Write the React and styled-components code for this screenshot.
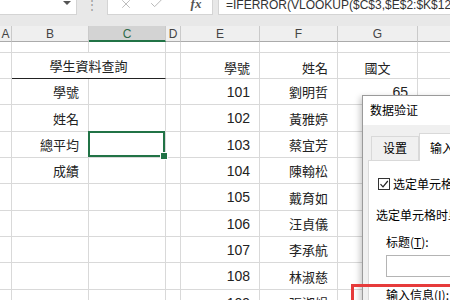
import React from 'react';
import styled, { createGlobalStyle, css } from 'styled-components';
import { X, Check } from 'lucide-react';

const Global = createGlobalStyle`
  html, body { margin: 0; padding: 0; width: 450px; height: 300px; overflow: hidden; background: #fff; }
  #root { width: 450px; height: 300px; }
  * { box-sizing: border-box; }
`;

const Page = styled.div`
  position: relative;
  width: 450px;
  height: 300px;
  overflow: hidden;
  font-family: "Liberation Sans", "Noto Sans CJK TC", sans-serif;
`;

/* ---------- formula bar ---------- */
const FormulaBar = styled.div`
  display: flex;
  align-items: flex-start;
  height: 36px;
  margin-top: -10px;
  background: #e8e8e8;
`;

const NameBox = styled.div`
  width: 77px;
  height: 25px;
  background: #fff;
  border-right: 1px solid #d4d4d4;
  border-bottom: 1px solid #d4d4d4;
  display: flex;
  align-items: center;
  justify-content: flex-end;
  padding-right: 5px;
`;

const Arrow = styled.span`
  width: 0;
  height: 0;
  border-left: 4px solid transparent;
  border-right: 4px solid transparent;
  border-top: 4px solid #555;
  margin-top: 1px;
`;

const Grip = styled.div`
  width: 30px;
  height: 25px;
  display: flex;
  align-items: center;
  justify-content: center;
  color: #9a9a9a;
  font-size: 12px;
  line-height: 1;
  padding-top: 4px;
`;

const FuncBox = styled.div`
  width: 106px;
  height: 25px;
  background: #fff;
  border: 1px solid #d4d4d4;
  border-top: none;
  display: flex;
  align-items: center;
  padding-top: 3px;
`;

const FuncSlot = styled.span`
  width: 20px;
  margin-left: ${(p) => p.$ml}px;
  display: flex;
  align-items: center;
  justify-content: center;
  color: #b8b8b8;
`;

const Fx = styled.span`
  font-family: "Liberation Serif", serif;
  font-style: italic;
  font-weight: bold;
  font-size: 13px;
  color: #555;
`;

const FormulaInput = styled.div`
  flex: 1;
  height: 25px;
  margin-left: 5px;
  background: #fff;
  border-left: 1px solid #d4d4d4;
  border-bottom: 1px solid #d4d4d4;
  padding-left: 7px;
  font-size: 12px;
  line-height: 25px;
  padding-top: 3px;
  color: #333;
  white-space: nowrap;
  overflow: hidden;
`;

/* ---------- sheet ---------- */
const Sheet = styled.div`
  display: grid;
  grid-template-columns: 12px 77px 77px 15px 79px 78px 80px 120px;
  grid-template-rows: 16px 11px 26px 26px 27px 26px 26px 27px 26px 26px 27px 26px;
`;

const ColHead = styled.div`
  background: ${(p) => (p.$active ? '#d3d3d3' : '#efefef')};
  border-right: 1px solid #cacaca;
  border-bottom: ${(p) => (p.$active ? '2px solid #217346' : '1px solid #ababab')};
  color: ${(p) => (p.$active ? '#2f6b4a' : '#444')};
  font-size: 12px;
  display: flex;
  align-items: center;
  justify-content: center;
  padding-top: ${(p) => (p.$active ? '2px' : '0')};
`;

const Cell = styled.div`
  position: relative;
  grid-column: span ${(p) => p.$span || 1};
  border-right: 1px solid #d9d9d9;
  border-bottom: 1px solid ${(p) => (p.$underline ? '#222' : '#d9d9d9')};
  display: flex;
  align-items: ${(p) => (p.$low ? 'flex-end' : 'center')};
  line-height: ${(p) => (p.$low ? '13px' : 'normal')};
  padding-bottom: ${(p) => (p.$low ? '3px' : '0')};
  justify-content: ${(p) => (p.$align === 'center' ? 'center' : 'flex-end')};
  padding-right: ${(p) => (p.$align === 'center' ? '0' : '9px')};
  font-size: ${(p) => (p.$num ? '14px' : '13px')};
  color: #222;
  white-space: nowrap;
  ${(p) =>
    p.$selected &&
    css`
      &::before {
        content: '';
        position: absolute;
        top: -1px;
        left: -1px;
        right: 0;
        bottom: 0;
        border: 2px solid #217346;
        z-index: 1;
      }
      &::after {
        content: '';
        position: absolute;
        right: -3px;
        bottom: -3px;
        width: 6px;
        height: 6px;
        background: #217346;
        border: 1px solid #fff;
        z-index: 2;
      }
    `}
`;

/* ---------- dialog ---------- */
const Dialog = styled.div`
  position: absolute;
  left: 362px;
  top: 95px;
  width: 150px;
  height: 240px;
  border: 1px solid #9a9a9a;
  box-shadow: -2px 2px 6px rgba(0, 0, 0, 0.22);
  background: #f0f0f0;
  font-family: "Noto Sans CJK SC", sans-serif;
  font-size: 12px;
  color: #000;
  z-index: 5;
`;

const TitleBar = styled.div`
  height: 29px;
  background: #fff;
  padding-left: 7px;
  line-height: 27px;
  white-space: nowrap;
`;

const DialogBody = styled.div`
  padding: 8px 0 0 5px;
`;

const Tabs = styled.div`
  display: flex;
  align-items: flex-end;
  height: 27px;
  margin-left: 3px;
  position: relative;
  z-index: 1;
`;

const Tab = styled.div`
  height: ${(p) => (p.$active ? '28px' : '24px')};
  width: ${(p) => (p.$active ? '80px' : '48px')};
  background: ${(p) => (p.$active ? '#fff' : '#f0f0f0')};
  border: 1px solid #d9d9d9;
  border-bottom: none;
  margin-bottom: ${(p) => (p.$active ? '-1px' : '0')};
  display: flex;
  align-items: center;
  justify-content: ${(p) => (p.$active ? 'flex-start' : 'center')};
  padding-left: ${(p) => (p.$active ? '10px' : '0')};
  padding-bottom: ${(p) => (p.$active ? '1px' : '3px')};
  white-space: nowrap;
`;

const Panel = styled.div`
  background: #fff;
  border: 1px solid #d9d9d9;
  height: 200px;
  padding-top: 16px;
  display: flex;
  flex-direction: column;
  align-items: stretch;
  white-space: nowrap;
`;

const CheckRow = styled.div`
  display: flex;
  align-items: center;
  height: 13px;
  margin-left: 9px;
`;

const Box = styled.span`
  width: 12px;
  height: 12px;
  border: 1px solid #333;
  background: #fff;
  display: flex;
  align-items: center;
  justify-content: center;
  flex-shrink: 0;
`;

const CheckLabel = styled.span`
  margin-left: 3px;
  line-height: 13px;
`;

const Line = styled.div`
  line-height: 16px;
  height: 16px;
  margin-top: ${(p) => p.$mt}px;
  margin-left: ${(p) => p.$ml}px;
`;

const TextBox = styled.div`
  height: 22px;
  margin-top: 5px;
  margin-left: 17px;
  border: 1px solid #b4b4b4;
  background: #fff;
`;

const Annotation = styled.div`
  position: absolute;
  left: 351px;
  top: 284px;
  width: 200px;
  height: 60px;
  border: 3px solid #e63b3b;
  z-index: 6;
`;

const cols = ['A', 'B', 'C', 'D', 'E', 'F', 'G', 'H'];

const students = [
  ['101', '劉明哲'],
  ['102', '黃雅婷'],
  ['103', '蔡宜芳'],
  ['104', '陳翰松'],
  ['105', '戴育如'],
  ['106', '汪貞儀'],
  ['107', '李承航'],
  ['108', '林淑慈'],
  ['109', '張淑娟'],
];

const leftLabels = ['學號', '姓名', '總平均', '成績'];

export default function App() {
  const rows = [];
  rows.push(cols.map((c) => <Cell key={`r1${c}`} />));
  rows.push([
    <Cell key="r2A" />,
    <Cell key="r2B" $span={2} $align="center" $underline>學生資料查詢</Cell>,
    <Cell key="r2D" />,
    <Cell key="r2E" $low>學號</Cell>,
    <Cell key="r2F" $low>姓名</Cell>,
    <Cell key="r2G" $low $align="center">國文</Cell>,
    <Cell key="r2H" />,
  ]);
  students.forEach(([id, name], i) => {
    const r = i + 3;
    rows.push([
      <Cell key={`r${r}A`} />,
      <Cell key={`r${r}B`}>{leftLabels[i] || ''}</Cell>,
      <Cell key={`r${r}C`} $selected={i === 2} />,
      <Cell key={`r${r}D`} />,
      <Cell key={`r${r}E`} $num>{id}</Cell>,
      <Cell key={`r${r}F`}>{name}</Cell>,
      <Cell key={`r${r}G`} $num>{i === 0 ? '65' : ''}</Cell>,
      <Cell key={`r${r}H`} />,
    ]);
  });

  return (
    <Page>
      <Global />
      <FormulaBar>
        <NameBox>
          <Arrow />
        </NameBox>
        <Grip>⋮</Grip>
        <FuncBox>
          <FuncSlot $ml={8}>
            <X size={14} strokeWidth={1.6} />
          </FuncSlot>
          <FuncSlot $ml={10}>
            <Check size={15} strokeWidth={1.6} />
          </FuncSlot>
          <FuncSlot $ml={20}>
            <Fx>fx</Fx>
          </FuncSlot>
        </FuncBox>
        <FormulaInput>=IFERROR(VLOOKUP($C$3,$E$2:$K$12,2,0),"")</FormulaInput>
      </FormulaBar>
      <Sheet>
        {cols.map((c) => (
          <ColHead key={c} $active={c === 'C'}>
            {c}
          </ColHead>
        ))}
        {rows}
      </Sheet>
      <Dialog>
        <TitleBar>数据验证</TitleBar>
        <DialogBody>
          <Tabs>
            <Tab>设置</Tab>
            <Tab $active>输入信息</Tab>
          </Tabs>
          <Panel>
            <CheckRow>
              <Box>
                <svg width="10" height="10" viewBox="0 0 10 10">
                  <polyline points="1.5,5.2 4,7.8 8.8,2" fill="none" stroke="#222" strokeWidth="1.2" />
                </svg>
              </Box>
              <CheckLabel>选定单元格时显示输入信息(S)</CheckLabel>
            </CheckRow>
            <Line $mt={17} $ml={7}>选定单元格时显示下列输入信息:</Line>
            <Line $mt={11} $ml={17}>
              标题(<u>T</u>):
            </Line>
            <TextBox />
            <Line $mt={10} $ml={17}>
              输入信息(<u>I</u>):
            </Line>
          </Panel>
        </DialogBody>
      </Dialog>
      <Annotation />
    </Page>
  );
}
